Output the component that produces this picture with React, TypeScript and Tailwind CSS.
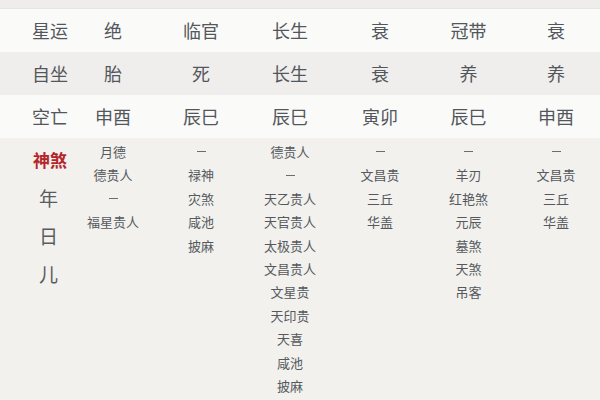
const COLS = 'grid grid-cols-[69px_88px_88px_90px_90px_87px_88px]';

const rows: { label: string; cells: string[]; bg: string }[] = [
  { label: '星运', cells: ['绝', '临官', '长生', '衰', '冠带', '衰'], bg: 'bg-[#fafaf9]' },
  { label: '自坐', cells: ['胎', '死', '长生', '衰', '养', '养'], bg: 'bg-[#efeeec]' },
  { label: '空亡', cells: ['申酉', '辰巳', '辰巳', '寅卯', '辰巳', '申酉'], bg: 'bg-[#fafaf9]' },
];

const shensha: string[][] = [
  ['月德', '德贵人', '—', '福星贵人'],
  ['—', '禄神', '灾煞', '咸池', '披麻'],
  ['德贵人', '—', '天乙贵人', '天官贵人', '太极贵人', '文昌贵人', '文星贵', '天印贵', '天喜', '咸池', '披麻'],
  ['—', '文昌贵', '三丘', '华盖'],
  ['—', '羊刃', '红艳煞', '元辰', '墓煞', '天煞', '吊客'],
  ['—', '文昌贵', '三丘', '华盖'],
];

export default function App() {
  return (
    <div className="w-[600px] h-[400px] overflow-hidden bg-[#f2f1ee] font-['Noto_Sans_CJK_SC',sans-serif] text-[#53575c]">
      <div className="h-[9px] bg-[#eeedeb] border-b border-[#e6e5e3]" />
      {rows.map((r) => (
        <div key={r.label} className={`${COLS} h-[43px] items-center text-[18px] ${r.bg}`}>
          <div className="pl-[31px] text-center">{r.label}</div>
          {r.cells.map((c, i) => (
            <div key={i} className="text-center">
              {c}
            </div>
          ))}
        </div>
      ))}
      <div className={`${COLS} pt-[2px]`}>
        <div className="pl-[31px] flex flex-col items-center">
          <div className="mt-[8px] h-[24px] leading-[24px] text-[17px] font-bold text-[#b4262b]">神煞</div>
          <div className="mt-[7px] leading-[38px] text-[19px] text-[#585c60] flex flex-col items-center pr-[3px]">
            <span>年</span>
            <span>日</span>
            <span>儿</span>
          </div>
        </div>
        {shensha.map((col, i) => (
          <div key={i} className="flex flex-col items-center text-[13px] leading-[23.4px] text-[#55595d]">
            {col.map((s, j) =>
              s === '—' ? (
                <span key={j} className="h-[23.4px] flex items-center">
                  <span className="block w-[9px] h-px bg-[#6a6d70]" />
                </span>
              ) : (
                <span key={j}>{s}</span>
              ),
            )}
          </div>
        ))}
      </div>
    </div>
  );
}
